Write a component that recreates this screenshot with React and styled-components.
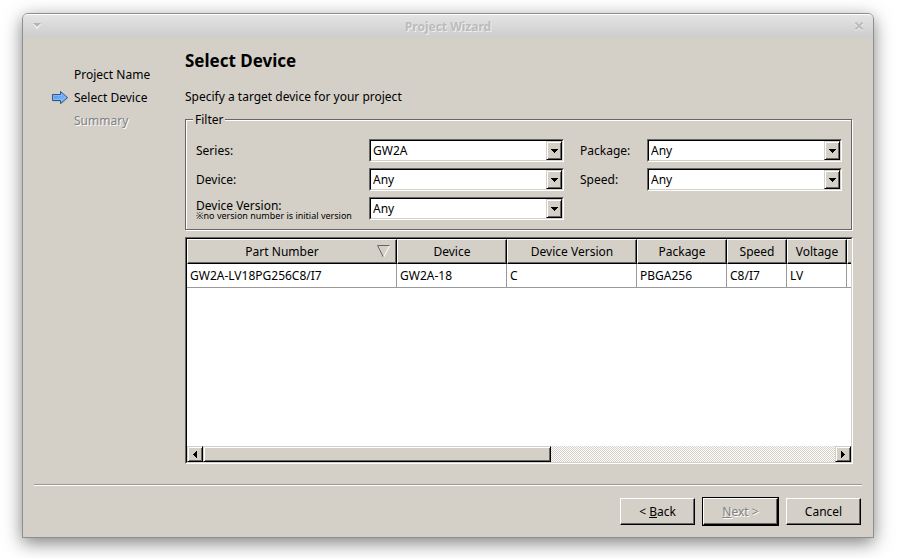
import { useRef } from 'react';
import styled, { createGlobalStyle, css } from 'styled-components';

const steps = [
    { name: 'Project Name', state: 'done' },
    { name: 'Select Device', state: 'current' },
    { name: 'Summary', state: 'disabled' },
];

const columns = [
    { name: 'Part Number', width: 210, sorted: true },
    { name: 'Device', width: 110 },
    { name: 'Device Version', width: 130 },
    { name: 'Package', width: 90 },
    { name: 'Speed', width: 60 },
    { name: 'Voltage', width: 60 },
    { name: '', width: 547 },
];

const parts = [
    ['GW2A-LV18PG256C8/I7', 'GW2A-18', 'C', 'PBGA256', 'C8/I7', 'LV', ''],
];

export default function App() {
    const viewport = useRef(null);
    const scroll = (left) => viewport.current.scrollBy({ left });

    return (
        <>
            <GlobalStyle />
            <Desktop>
                <Window>
                    <TitleBar>
                        <TitleButton aria-label="Window menu">
                            <svg width="10" height="8" viewBox="0 0 10 8">
                                <path d="M1 2h8L5 7z" fill="#f6f6f6" />
                                <path d="M1 1h8L5 5z" fill="#b4b4b4" />
                            </svg>
                        </TitleButton>
                        <TitleText>Project Wizard</TitleText>
                        <TitleButton aria-label="Close">
                            <svg width="10" height="10" viewBox="0 0 10 10" fill="none" strokeWidth="2">
                                <path d="M1.5 2.5l7 7M8.5 2.5l-7 7" stroke="#f4f4f4" />
                                <path d="M1.5 1.5l7 7M8.5 1.5l-7 7" stroke="#bcbcbc" />
                            </svg>
                        </TitleButton>
                    </TitleBar>
                    <Body>
                        <Steps>
                            {steps.map((step) => (
                                <Step key={step.name} $disabled={step.state === 'disabled'}>
                                    <StepMark>{step.state === 'current' && <Arrow />}</StepMark>
                                    {step.name}
                                </Step>
                            ))}
                        </Steps>
                        <Content>
                            <Heading>Select Device</Heading>
                            <Hint>Specify a target device for your project</Hint>
                            <Filter>
                                <legend>Filter</legend>
                                <FilterGrid>
                                    <label htmlFor="series">Series:</label>
                                    <ComboBox id="series" value="GW2A" />
                                    <label htmlFor="package">Package:</label>
                                    <ComboBox id="package" value="Any" />
                                    <label htmlFor="device">Device:</label>
                                    <ComboBox id="device" value="Any" />
                                    <label htmlFor="speed">Speed:</label>
                                    <ComboBox id="speed" value="Any" />
                                    <VersionLabel htmlFor="version">
                                        Device Version:
                                        <small>※no version number is initial version</small>
                                    </VersionLabel>
                                    <ComboBox id="version" value="Any" />
                                </FilterGrid>
                            </Filter>
                            <TableFrame>
                                <Viewport ref={viewport}>
                                    <Table>
                                        <colgroup>
                                            {columns.map((column) => (
                                                <Column key={column.name} $width={column.width} />
                                            ))}
                                        </colgroup>
                                        <thead>
                                            <tr>
                                                {columns.map((column) => (
                                                    <HeaderCell key={column.name}>
                                                        <HeaderContent>
                                                            <span>{column.name}</span>
                                                            {column.sorted && <SortMark />}
                                                        </HeaderContent>
                                                    </HeaderCell>
                                                ))}
                                            </tr>
                                        </thead>
                                        <tbody>
                                            {parts.map((part) => (
                                                <tr key={part[0]}>
                                                    {part.map((value, i) => (
                                                        <Cell key={i}>{value}</Cell>
                                                    ))}
                                                </tr>
                                            ))}
                                        </tbody>
                                    </Table>
                                </Viewport>
                                <ScrollBar>
                                    <ScrollButton aria-label="Scroll left" onClick={() => scroll(-60)}>
                                        <svg width="4" height="7" viewBox="0 0 4 7" shapeRendering="crispEdges">
                                            <path d="M4 0v7L0 3.5z" />
                                        </svg>
                                    </ScrollButton>
                                    <Track>
                                        <Thumb />
                                    </Track>
                                    <ScrollButton aria-label="Scroll right" onClick={() => scroll(60)}>
                                        <svg width="4" height="7" viewBox="0 0 4 7" shapeRendering="crispEdges">
                                            <path d="M0 0v7l4-3.5z" />
                                        </svg>
                                    </ScrollButton>
                                </ScrollBar>
                            </TableFrame>
                        </Content>
                    </Body>
                    <Footer>
                        <Button>&lt;&nbsp;<u>B</u>ack</Button>
                        <DefaultFrame>
                            <Button disabled><u>N</u>ext&nbsp;&gt;</Button>
                        </DefaultFrame>
                        <Button>Cancel</Button>
                    </Footer>
                </Window>
            </Desktop>
        </>
    );
}

function ComboBox({ id, value }) {
    return (
        <Combo>
            <Select id={id} defaultValue={value}>
                <option>Any</option>
                {value !== 'Any' && <option>{value}</option>}
            </Select>
            <DropMark>
                <svg width="7" height="4" viewBox="0 0 7 4" shapeRendering="crispEdges">
                    <path d="M0 0h7v1h-1v1h-1v1h-1v1h-1v-1h-1v-1h-1v-1h-1z" />
                </svg>
            </DropMark>
        </Combo>
    );
}

function Arrow() {
    return (
        <svg width="17" height="16" viewBox="0 0 17 16">
            <defs>
                <linearGradient id="arrow" x1="0" y1="0" x2="1" y2="1">
                    <stop offset="0" stopColor="#4a8fe8" />
                    <stop offset="1" stopColor="#8cc4ff" />
                </linearGradient>
            </defs>
            <path d="M1 5.5h8v-3l7 6-7 6v-3H1z" fill="#000" opacity="0.15" />
            <path d="M.5 4.5h8v-3l7 6-7 6v-3h-8z" fill="url(#arrow)" stroke="#2f5688" />
            <path d="M1.5 5.5h8v-2l4.5 4-4.5 4v-2h-8z" fill="none" stroke="#8fc0ff" opacity="0.7" />
        </svg>
    );
}

function SortMark() {
    return (
        <svg width="13" height="13" viewBox="0 0 13 13" fill="none">
            <path d="M12.5 .5H.5l6 12" stroke="#666" />
            <path d="M12.5 1l-6 11.5" stroke="#fff" />
        </svg>
    );
}

const GlobalStyle = createGlobalStyle`
    * {
        box-sizing: border-box;
    }
    body {
        margin: 0;
        background: #fff;
        color: #000;
        font-family: 'Noto Sans', 'DejaVu Sans', sans-serif;
        font-size: 12px;
        line-height: 17px;
    }
    button, select {
        color: inherit;
        font: inherit;
    }
`;

const raised = css`
    background: #d4d0c8;
    border: 1px solid;
    border-color: #fff #000 #000 #fff;
    border-radius: 0;
    box-shadow: inset -1px -1px #666;
`;

const raisedSmall = css`
    background: #d4d0c8;
    border: 1px solid;
    border-color: #d4d0c8 #000 #000 #d4d0c8;
    box-shadow: inset 1px 1px #fff, inset -1px -1px #666;
`;

const sunken = css`
    background: #fff;
    border: 1px solid;
    border-color: #666 #fff #fff #666;
`;

const sunkenInner = css`
    border: 1px solid;
    border-color: #000 #d4d0c8 #d4d0c8 #000;
`;

const Desktop = styled.div`
    display: flex;
    min-height: 100vh;
    padding: 13px 23px 20px 22px;
`;

const Window = styled.main`
    display: flex;
    flex: 1;
    flex-direction: column;
    min-width: 0;
    background: #d4d0c8;
    border: 1px solid #8f8f8f;
    border-radius: 6px 6px 0 0;
    box-shadow: 0 5px 18px rgba(0, 0, 0, 0.5);
`;

const TitleBar = styled.header`
    display: flex;
    align-items: center;
    height: 23px;
    padding: 0 9px;
    background: linear-gradient(#e4e4e4, #cdcdcd);
    border-top: 1px solid #fff;
    border-radius: 5px 5px 0 0;
`;

const TitleButton = styled.button`
    display: flex;
    padding: 0;
    background: none;
    border: 0;
`;

const TitleText = styled.div`
    flex: 1;
    color: #bcbcbc;
    font-weight: 700;
    text-align: center;
    text-shadow: 1px 1px #eee;
`;

const Body = styled.div`
    display: flex;
    flex: 1;
    padding: 12px 20px 20px 29px;
`;

const Steps = styled.ol`
    flex: none;
    width: 133px;
    margin: 0;
    padding: 14px 0 0;
    list-style: none;
`;

const Step = styled.li`
    display: flex;
    align-items: center;
    height: 23px;
    color: ${({ $disabled }) => ($disabled ? '#808080' : '#000')};
    text-shadow: ${({ $disabled }) => ($disabled ? '1px 1px #fff' : 'none')};
`;

const StepMark = styled.span`
    display: flex;
    width: 22px;
`;

const Content = styled.section`
    display: flex;
    flex: 1;
    flex-direction: column;
    min-width: 0;
`;

const Heading = styled.h1`
    margin: 0 0 15px;
    font-size: 17px;
    line-height: 24px;
`;

const Hint = styled.p`
    margin: 0 0 6px;
`;

const Filter = styled.fieldset`
    min-width: 0;
    margin: 0 1px 7px 0;
    padding: 11px 9px 9px 10px;
    border: 1px solid #666;
    box-shadow: 1px 1px #fff, inset 1px 1px #fff;

    legend {
        margin-left: -3px;
        padding: 0 2px;
        background: #d4d0c8;
    }
`;

const FilterGrid = styled.div`
    display: grid;
    grid-template-columns: 157px 1fr 51px 1fr;
    grid-auto-rows: 23px;
    align-items: center;
    gap: 6px 16px;
`;

const VersionLabel = styled.label`
    display: flex;
    flex-direction: column;
    padding-top: 2px;
    line-height: 13px;
    white-space: nowrap;

    small {
        font-size: 9px;
        line-height: 8px;
    }
`;

const Combo = styled.div`
    ${sunken}
    display: grid;
    height: 23px;
`;

const Select = styled.select`
    ${sunkenInner}
    grid-area: 1 / 1;
    width: 100%;
    padding: 0 18px 0 2px;
    appearance: none;
    background: #fff;
    border-radius: 0;
`;

const DropMark = styled.span`
    ${raisedSmall}
    display: flex;
    grid-area: 1 / 1;
    align-items: center;
    justify-content: center;
    justify-self: end;
    width: 16px;
    margin: 1px 1px 1px 0;
    pointer-events: none;
    z-index: 1;
`;

const TableFrame = styled.div`
    ${sunken}
    display: flex;
    flex: 1;
    flex-direction: column;
    min-height: 0;
`;

const Viewport = styled.div`
    flex: 1;
    overflow: hidden;
    border: 1px solid;
    border-color: #000 #d4d0c8 #fff #000;
    border-bottom: 0;
`;

const Table = styled.table`
    width: 1207px;
    table-layout: fixed;
    border-collapse: separate;
    border-spacing: 0;
`;

const Column = styled.col`
    width: ${({ $width }) => $width}px;
`;

const HeaderCell = styled.th`
    ${raised}
    height: 25px;
    padding: 0 6px;
    font-weight: 400;
`;

const HeaderContent = styled.div`
    display: flex;
    align-items: center;
    gap: 7px;

    span {
        flex: 1;
    }
`;

const Cell = styled.td`
    height: 24px;
    padding: 0 3px;
    border: solid #9a9a9a;
    border-width: 0 1px 1px 0;
`;

const ScrollBar = styled.div`
    display: flex;
    height: 17px;
    border: 1px solid;
    border-color: #000 #d4d0c8 #d4d0c8 #000;
    border-top: 0;
`;

const ScrollButton = styled.button`
    ${raisedSmall}
    display: flex;
    flex: none;
    align-items: center;
    justify-content: center;
    width: 16px;
    padding: 0;
`;

const Track = styled.div`
    flex: 1;
    background: repeating-conic-gradient(#d4d0c8 0 25%, #fff 0 50%) 0 0 / 2px 2px;
`;

const Thumb = styled.div`
    ${raisedSmall}
    width: 55%;
    height: 100%;
`;

const Footer = styled.footer`
    display: flex;
    align-items: center;
    justify-content: flex-end;
    gap: 7px;
    margin: 0 11px;
    padding: 12px 1px 11px 0;
    border-top: 1px solid #999;
    box-shadow: inset 0 1px #fff;
`;

const Button = styled.button`
    ${raised}
    width: 75px;
    height: 27px;
    padding: 0;

    &:disabled {
        color: #808080;
        text-shadow: 1px 1px #fff;
    }
`;

const DefaultFrame = styled.span`
    display: flex;
    border: 1px solid #000;
`;
